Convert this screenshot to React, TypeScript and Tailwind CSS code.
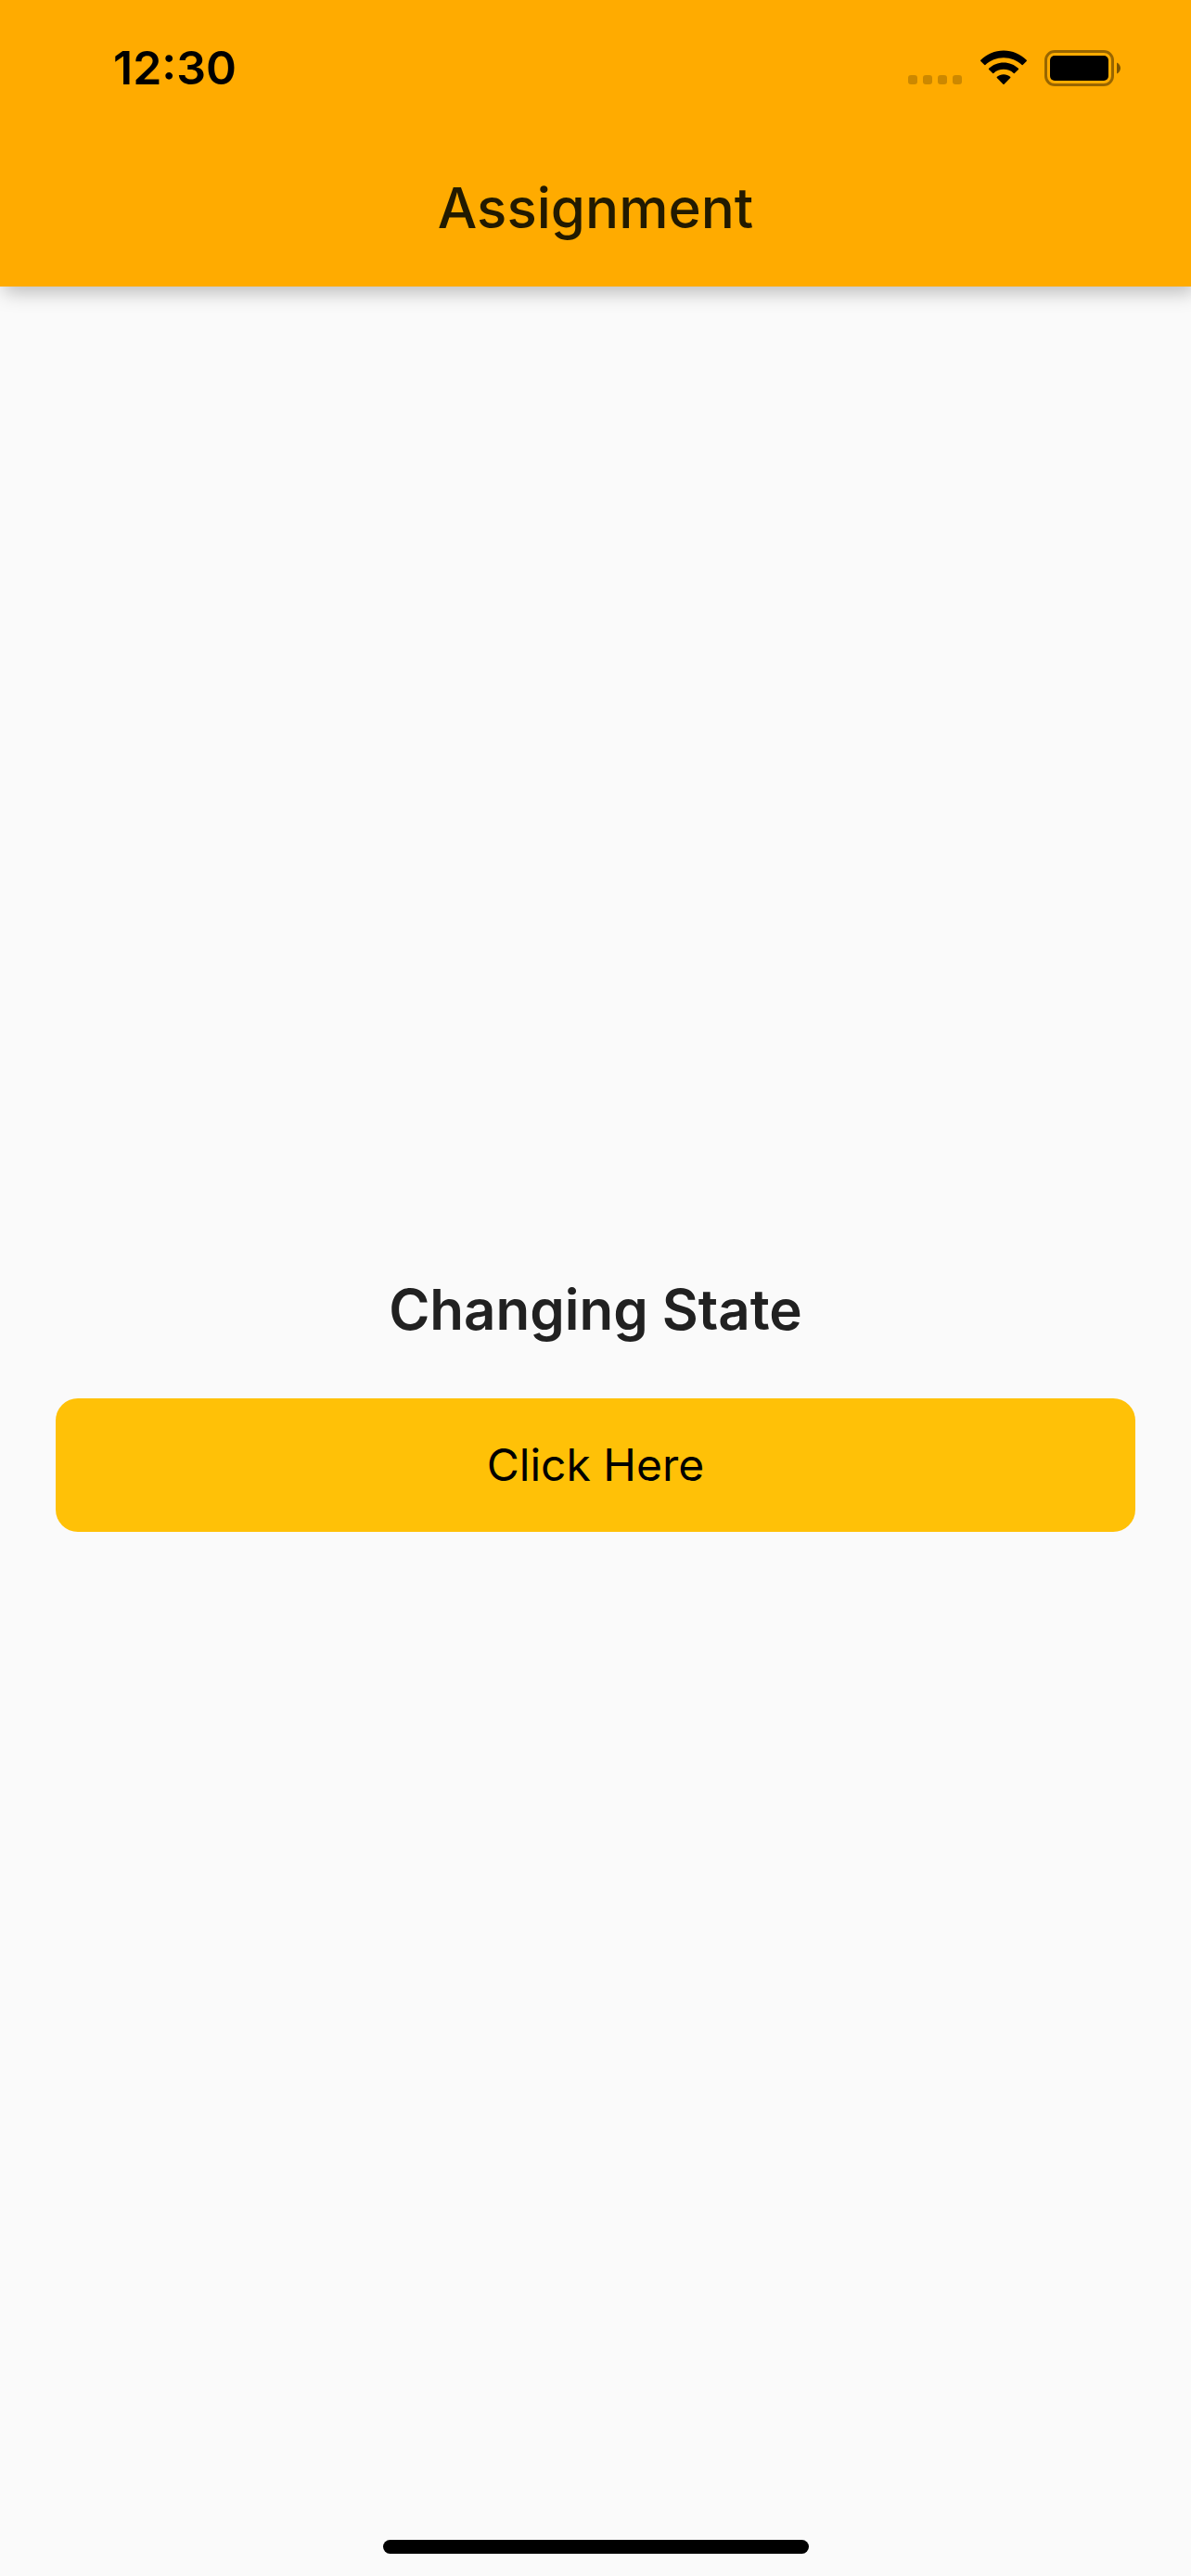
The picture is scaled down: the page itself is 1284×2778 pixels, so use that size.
import { useState } from "react";

function SignalDots() {
  return (
    <svg width="59" height="38" viewBox="0 0 59 38" fill="#000" fillOpacity="0.2" aria-hidden="true">
      <rect x="0" y="27" width="10" height="10" rx="3" />
      <rect x="16" y="27" width="10" height="10" rx="3" />
      <rect x="32" y="27" width="10" height="10" rx="3" />
      <rect x="48" y="27" width="10" height="10" rx="3" />
    </svg>
  );
}

function Wifi() {
  return (
    <svg width="52" height="38" viewBox="0 0 52 38" fill="#000" aria-hidden="true">
      <path d="M26 8.2C33.6 8.2 40.500 11.1 45.700 15.900Q46.300 16.400 46.900 15.800L50.700 12Q51.300 11.300 50.700 10.700C44.200 4.400 35.500 0.500 26 0.500C16.500 0.500 7.800 4.400 1.300 10.700Q0.700 11.300 1.300 12L5.100 15.800Q5.700 16.400 6.300 15.900C11.500 11.100 18.400 8.200 26 8.200Z" />
      <path d="M26 20.800C30.100 20.800 33.900 22.300 36.800 24.900Q37.400 25.400 38 24.800L41.900 21Q42.500 20.300 41.900 19.700C37.700 15.800 32.100 13.400 26 13.400C19.900 13.400 14.300 15.800 10.100 19.700Q9.500 20.300 10.100 21L14 24.800Q14.600 25.400 15.200 24.900C18.100 22.300 21.900 20.800 26 20.800Z" />
      <path d="M33.200 30Q33.800 29.300 33.100 28.700C31.200 27.100 28.700 26.200 26 26.200C23.300 26.200 20.800 27.100 18.900 28.700Q18.200 29.300 18.800 30L25.400 36.700Q26 37.200 26.600 36.700Z" />
    </svg>
  );
}

function Battery() {
  return (
    <svg width="82" height="39" viewBox="0 0 82 39" aria-hidden="true">
      <rect x="1.500" y="1.500" width="72" height="36" rx="9.500" fill="none" stroke="#000" strokeOpacity="0.400" strokeWidth="3" />
      <rect x="6" y="6" width="63" height="27" rx="5" fill="#000" />
      <path d="M78 13.500C80.500 14.500 82 17 82 19.500C82 22 80.500 24.500 78 25.500Z" fill="#000" fillOpacity="0.5" />
    </svg>
  );
}

export default function App() {
  const [changed, setChanged] = useState(false);

  return (
    <div className="flex min-h-screen flex-col bg-[#fafafa] font-['Inter',sans-serif]">
      <header className="bg-[#ffab00] shadow-[4px_6px_20px_rgba(0,0,0,0.26)]">
        <div className="flex h-[146px] items-center justify-between pr-[76px] pl-[122px]">
          <time className="text-[50px] leading-[60px] font-semibold text-black">12:30</time>
          <div className="flex items-center gap-[18px]">
            <SignalDots />
            <Wifi />
            <Battery />
          </div>
        </div>
        <div className="flex h-[163px] items-center justify-center pb-2">
          <h1 className="text-[60px] leading-[72px] font-medium text-[#221a00]">Assignment</h1>
        </div>
      </header>

      <main className="flex flex-1 flex-col justify-center gap-[60px] px-[60px]">
        <p className="text-center text-[60px] leading-[72px] font-semibold text-[#212121]">
          {changed ? "State Changed" : "Changing State"}
        </p>
        <button
          type="button"
          onClick={() => setChanged(!changed)}
          className="h-36 w-full rounded-3xl bg-[#ffc107] text-[48px] leading-[60px] text-black"
        >
          Click Here
        </button>
      </main>

      <footer className="flex justify-center pt-[21px] pb-6">
        <div className="h-[15px] w-[459px] rounded-full bg-black" />
      </footer>
    </div>
  );
}
